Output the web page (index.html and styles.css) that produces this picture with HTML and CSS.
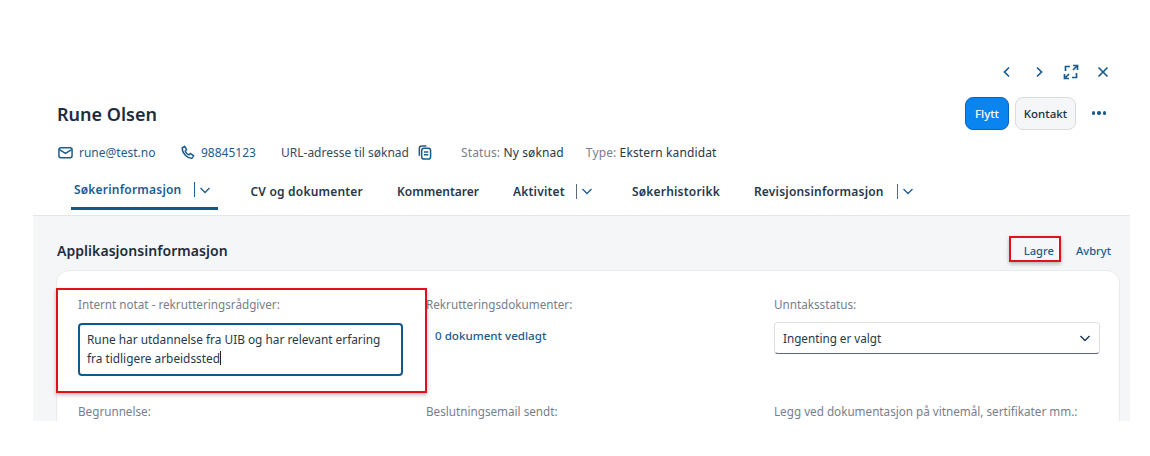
FILE: index.html
```html
<!DOCTYPE html>
<html lang="no">
<head>
<meta charset="utf-8">
<title>Rune Olsen</title>
<link rel="stylesheet" href="styles.css">
</head>
<body>
<div class="page">
  <header class="head">
    <nav class="nav-icons">
      <svg class="ic" viewBox="0 0 16 16"><path d="M10 3.500 5.500 8l4.500 4.500"/></svg>
      <svg class="ic" viewBox="0 0 16 16"><path d="M6 3.500 10.500 8 6 12.500"/></svg>
      <svg class="ic" viewBox="0 0 16 16"><path d="M7 2.500H2.500V7M9 13.500h4.500V9M10 1.500h4.500V6M14.500 1.500 10 6M6 14.500H1.500V10M1.500 14.500 6 10"/></svg>
      <svg class="ic" viewBox="0 0 16 16"><path d="m3.500 3.500 9 9M12.500 3.500l-9 9"/></svg>
    </nav>
    <div class="title-row">
      <h1>Rune Olsen</h1>
      <div class="actions">
        <button class="btn primary">Flytt</button>
        <button class="btn">Kontakt</button>
        <span class="more"><i></i><i></i><i></i></span>
      </div>
    </div>
    <div class="meta">
      <span class="link m1"><svg class="mi" viewBox="0 0 16 16"><rect x="1" y="3" width="14" height="10.500" rx="2"/><path d="m1.500 5 6.500 4 6.500-4"/></svg>rune@test.no</span>
      <span class="link m2"><svg class="mi" viewBox="0 0 16 16"><path d="M5 1.500 2.500 3C1.800 8 7.500 14.500 13 14l1.500-2.500-3.500-2.500-1.500 1.500C8 10 6 8 5.500 6.500L7 5Z"/></svg>98845123</span>
      <span class="url">URL-adresse til søknad<svg class="mi copy" viewBox="0 0 16 16"><path d="M2.500 11.500V3.500C2.500 2 3.500 1 5 1h5"/><rect x="5" y="3.500" width="9.500" height="11.500" rx="2.500"/><path d="M7.500 7.500h4.500M7.500 10.500h4.500"/></svg></span>
      <span class="stat"><em>Status:</em> Ny søknad</span>
      <span class="stat"><em>Type:</em> Ekstern kandidat</span>
    </div>
    <div class="tabs">
      <span class="tab menu active">Søkerinformasjon<span class="sep"></span><svg class="chev" viewBox="0 0 12 12"><path d="m1.500 4 4.500 4.500L10.500 4"/></svg></span>
      <span class="tab">CV og dokumenter</span>
      <span class="tab tight">Kommentarer</span>
      <span class="tab menu">Aktivitet<span class="sep short"></span><svg class="chev" viewBox="0 0 12 12"><path d="m1.500 4 4.500 4.500L10.500 4"/></svg></span>
      <span class="tab">Søkerhistorikk</span>
      <span class="tab menu">Revisjonsinformasjon<span class="sep"></span><svg class="chev" viewBox="0 0 12 12"><path d="m1.500 4 4.500 4.500L10.500 4"/></svg></span>
    </div>
  </header>
  <section class="sect">
    <div class="sect-head">
      <h2>Applikasjonsinformasjon</h2>
      <div class="sect-acts"><a class="save">Lagre</a><a>Avbryt</a></div>
    </div>
    <div class="card">
      <div class="col">
        <label>Internt notat - rekrutteringsrådgiver:</label>
        <div class="note">Rune har utdannelse fra UIB og har relevant erfaring<br>fra tidligere arbeidssted<span class="caret"></span></div>
        <label class="low">Begrunnelse:</label>
      </div>
      <div class="col">
        <label>Rekrutteringsdokumenter:</label>
        <a class="docs">0 dokument vedlagt</a>
        <label class="low">Beslutningsemail sendt:</label>
      </div>
      <div class="col">
        <label>Unntaksstatus:</label>
        <div class="select">Ingenting er valgt<svg class="sel-chev" viewBox="0 0 12 12"><path d="m1.500 4 4.500 4.500L10.500 4"/></svg></div>
        <label class="low">Legg ved dokumentasjon på vitnemål, sertifikater mm.:</label>
      </div>
      <div class="redbox"></div>
    </div>
  </section>
</div>
</body>
</html>
```
FILE: styles.css
```css
* { box-sizing: border-box; }
html, body { margin: 0; background: #fff; }
body { font-family: "Noto Sans", "Open Sans", sans-serif; color: #26384c; height: 456px; overflow: hidden; }
.page { width: 1097px; height: 421px; margin-left: 33px; overflow: hidden; display: flex; flex-direction: column; }
.head { height: 216px; padding: 62px 0 0 23px; flex: none; border-bottom: 1px solid #e4e7ea; }
.nav-icons { display: flex; justify-content: flex-end; align-items: center; gap: 16px; padding-right: 19px; height: 20px; }
.ic { width: 16px; height: 16px; fill: none; stroke: #1b5c8f; stroke-width: 1.7; }
.title-row { display: flex; justify-content: space-between; align-items: center; height: 34px; margin-top: 14px; padding-right: 19px; }
h1 { margin: 0; padding: 2px 0 0 1px; font-size: 18px; font-weight: 600; color: #1d2d3e; }
.actions { display: flex; align-items: center; gap: 6px; }
.btn { width: 61px; height: 33px; padding: 0; border: 1.500px solid #d9dbde; border-radius: 8px; background: #f5f6f7; font: 500 11.5px "Noto Sans", sans-serif; color: #1d2d3e; }
.btn.primary { width: 44px; background: #0a84ee; border-color: #0a64b8; color: #fff; }
.more { display: flex; gap: 2px; margin-left: 5px; width: 24px; justify-content: center; }
.more i { width: 3.500px; height: 3.500px; border-radius: 50%; background: #1b5c8f; }
.meta { display: flex; align-items: center; height: 20px; margin-top: 12px; font-size: 12px; padding-left: 2px; }
.mi { width: 15px; height: 15px; fill: none; stroke: #1b5c8f; stroke-width: 1.6; margin-right: 6px; flex: none; }
.link { display: flex; align-items: center; color: #1b5c8f; }
.m1 { width: 122px; }
.m2 { width: 101px; }
.url { display: flex; align-items: center; width: 180px; color: #3c4a5a; }
.copy { margin: 0 0 0 8px; }
.stat { margin-right: 22px; color: #26384c; letter-spacing: .12px; }
.stat em { font-style: normal; color: #76808c; }
.tabs { display: flex; height: 44px; margin-top: 10px; font-size: 12px; font-weight: 600; letter-spacing: .2px; color: #26384c; padding-left: 15px; }
.tab { display: flex; align-items: center; height: 38px; padding: 0 3px; margin-right: 28px; }
.tab.tight { letter-spacing: 0; }
.tab.menu { padding-right: 7px; margin-right: 29px; }
.tab.active { color: #1b5c8f; border-bottom: 3px solid #0f5a8d; }
.sep { width: 1px; height: 15px; background: #5d6a78; margin: 0 4px 0 13px; }
.active .sep { background: #1b5c8f; }
.sep.short { margin-left: 11px; }
.chev { width: 12px; height: 12px; fill: none; stroke: #1b5c8f; stroke-width: 1.3; }
.sect { flex: 1; background: #f5f6f7; padding: 0 10px 0 23px; }
.sect-head { display: flex; justify-content: space-between; align-items: center; height: 54px; padding: 24px 9px 10px 1px; }
h2 { margin: 0; font-size: 14px; font-weight: 600; letter-spacing: .05px; color: #1d2d3e; }
.sect-acts { display: flex; gap: 22px; font-size: 11.2px; font-weight: 500; color: #1b5c8f; }
.save { position: relative; }
.save::after { content: ""; position: absolute; left: -15px; right: -7px; top: -7px; bottom: -4px; border: 2px solid #e2101a; box-shadow: 0 2px 4px #0004; }
.card { position: relative; display: grid; grid-template-columns: 348px 348px 346px; height: 200px; background: #fff; border: 1px solid #e8eaec; border-radius: 13px 13px 0 0; padding: 25px 0 0 21px; font-size: 12px; }
.col { display: flex; flex-direction: column; align-items: flex-start; }
label { color: #76808c; height: 16px; font-size: 11.7px; }
.low { position: absolute; top: 132px; }
.note { width: 325px; height: 53px; margin-top: 11px; border: 2px solid #0f5a8d; border-radius: 4px; padding: 5px 7px; line-height: 19px; font-size: 11.85px; color: #26384c; }
.caret { display: inline-block; width: 1px; height: 14px; background: #222; vertical-align: -2px; }
.docs { margin: 16px 0 0 9px; color: #1b5c8f; font-size: 11.6px; font-weight: 500; }
.select { width: 326px; height: 32px; margin-top: 10px; display: flex; justify-content: space-between; align-items: center; border: 1px solid #dde0e3; border-bottom: 1px solid #5d6a78; border-radius: 4px; padding: 0 8px; font-size: 11.7px; color: #26384c; }
.sel-chev { width: 12px; height: 12px; fill: none; stroke: #1d3d5c; stroke-width: 1.5; }
.redbox { position: absolute; left: -1px; top: 17px; width: 371px; height: 105px; border: 2px solid #e2101a; box-shadow: 0 2px 4px #0004; }
```
